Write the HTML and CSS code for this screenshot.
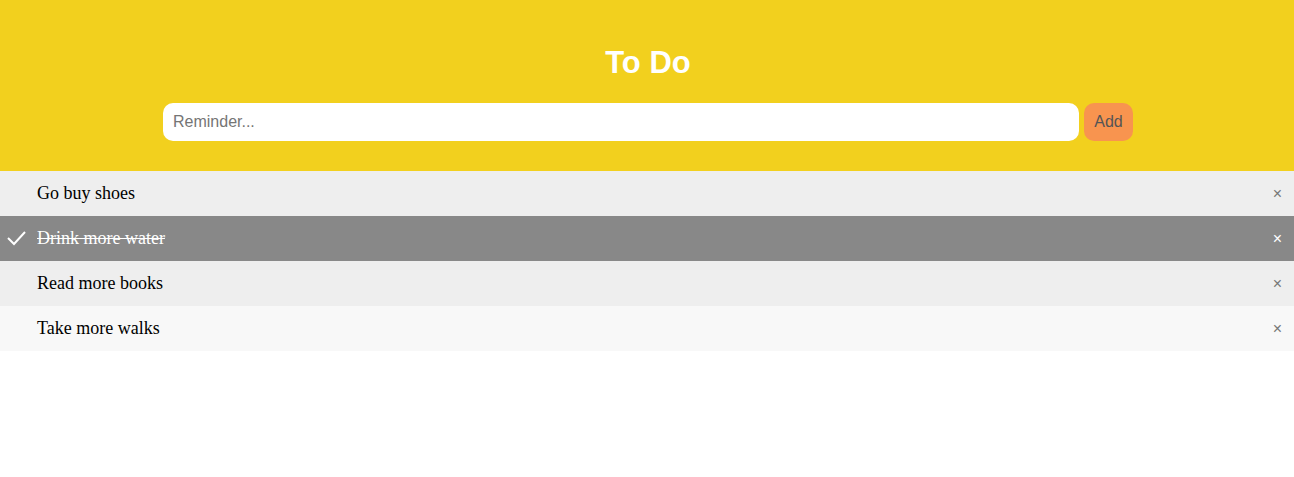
FILE: index.html
```html
<!DOCTYPE html>
<html>
<head>
<meta charset="utf-8">
<title>To Do</title>
<link rel="stylesheet" href="styles.css">
</head>
<body>
<div class="header">
  <h2 class="title">To Do</h2>
  <div class="entry">
    <input class="entry-input" type="text" placeholder="Reminder...">
    <span class="add-btn">Add</span>
  </div>
</div>
<ul class="list">
  <li class="item">Go buy shoes<span class="close">×</span></li>
  <li class="item checked"><svg class="check" width="20" height="18" viewBox="0 0 20 18"><polyline points="1,9 7,15 18,3" fill="none" stroke="#fff" stroke-width="2"/></svg>Drink more water<span class="close">×</span></li>
  <li class="item">Read more books<span class="close">×</span></li>
  <li class="item light">Take more walks<span class="close">×</span></li>
</ul>
</body>
</html>
```

FILE: styles.css
```css
html, body {
  margin: 0;
  padding: 0;
  background: #fff;
}
.header {
  background: #f2d01e;
  padding: 30px 0 30px 2px;
  text-align: center;
}
.title {
  margin: 15px 0 22px;
  font-family: "Liberation Sans", Arial, sans-serif;
  font-weight: bold;
  font-size: 31px;
  line-height: 36px;
  color: #fff;
}
.entry {
  display: flex;
  width: 970px;
  margin: 0 auto;
  gap: 5px;
}
.entry-input {
  flex: 1;
  height: 38px;
  box-sizing: border-box;
  border: none;
  border-radius: 10px;
  padding: 0 10px;
  font-family: "Liberation Sans", Arial, sans-serif;
  font-size: 16px;
  color: #333;
  background: #fff;
  outline: none;
}
.entry-input::placeholder {
  color: #757575;
}
.add-btn {
  width: 49px;
  height: 38px;
  box-sizing: border-box;
  background: #f8944f;
  border-radius: 10px;
  display: flex;
  align-items: center;
  justify-content: center;
  font-family: "Liberation Sans", Arial, sans-serif;
  font-size: 16px;
  color: #555;
}
.list {
  list-style: none;
  margin: 0;
  padding: 0;
}
.item {
  position: relative;
  height: 45px;
  display: flex;
  align-items: center;
  padding-left: 37px;
  background: #eee;
  font-family: "Liberation Serif", "Times New Roman", serif;
  font-size: 18px;
  color: #000;
}
.item.light {
  background: #f8f8f8;
}
.item.checked {
  background: #888;
  color: #fff;
  text-decoration: line-through;
}
.check {
  position: absolute;
  left: 7px;
  top: 13px;
}
.close {
  position: absolute;
  right: 12px;
  top: 0;
  height: 45px;
  display: flex;
  align-items: center;
  font-family: "Liberation Sans", Arial, sans-serif;
  font-size: 16px;
  color: #777;
  text-decoration: none;
}
.item.checked .close {
  color: #fff;
}
```
